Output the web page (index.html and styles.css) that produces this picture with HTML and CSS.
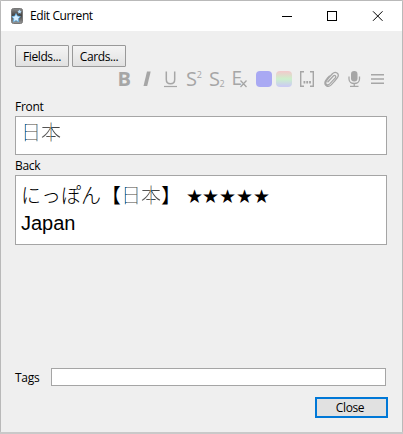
FILE: index.html
```html
<!DOCTYPE html>
<html lang="en">
<head>
<meta charset="utf-8">
<title>Edit Current</title>
<link rel="stylesheet" href="styles.css">
</head>
<body>
<main class="window">
  <header class="titlebar">
    <svg class="logo" width="12" height="16" viewBox="0 0 12 16">
      <defs><linearGradient id="lg" x2="0" y2="1"><stop offset="0" stop-color="#8a8a8a"/><stop offset=".45" stop-color="#444"/><stop offset="1" stop-color="#999"/></linearGradient></defs>
      <rect x=".5" y=".5" width="11" height="15" rx="2" fill="url(#lg)" stroke="#777"/>
      <path d="M5 5.500l1.400 2.600 3 .5-2.100 2.200.4 3-2.700-1.300-2.700 1.300.5-3L.9 8.600l2.900-.5z" fill="#d8efff" stroke="#56aee8" stroke-width=".7"/>
      <path d="M8.500 1.500l.7 1.300 1.500.2-1 1.100.2 1.500-1.400-.7-1.400.7.300-1.500-1.100-1.100 1.500-.2z" fill="#b9e0fb"/>
    </svg>
    <h1 class="title">Edit Current</h1>
    <svg class="controls" width="106" height="12" viewBox="0 0 106 12" fill="none" stroke="#000">
      <path d="M0 5.500h10M45.500 .5h9v9h-9z" shape-rendering="crispEdges"/><path d="M91 .3l9.500 9.500M100.500 .3L91 9.800"/>
    </svg>
  </header>
  <div class="buttons"><button class="btn fields">Fields...</button><button class="btn cards">Cards...</button></div>
  <svg class="tools" width="272" height="36" viewBox="0 -8 272 36" fill="#a6a6a6">
    <defs><linearGradient id="rainbow" x2="0" y2="1"><stop offset=".05" stop-color="#f0cccc"/><stop offset=".5" stop-color="#ccf0cc"/><stop offset=".95" stop-color="#ccccf3"/></linearGradient></defs>
    <text class="tool-text bold" x="1.500" y="15.500" textLength="13.500" lengthAdjust="spacingAndGlyphs">B</text>
    <path d="M31 1.500h3.700l-3.500 14.500h-3.700z"/>
    <g fill="none" stroke="#a6a6a6" stroke-width="1.500"><path d="M50.300 1.500v8c0 5.700 8.400 5.700 8.400 0v-8"/><path d="M48 16.500h13" stroke-width="1.200"/></g>
    <text class="tool-text" x="70" y="15.500" textLength="11" lengthAdjust="spacingAndGlyphs">S</text><text class="small" x="80.800" y="7.500">2</text>
    <text class="tool-text" x="93" y="15.500" textLength="11" lengthAdjust="spacingAndGlyphs">S</text><text class="small" x="103.500" y="17">2</text>
    <text class="tool-text" x="115.500" y="14.500" textLength="10.500" lengthAdjust="spacingAndGlyphs">E</text>
    <path d="M124.500 10.500l6 6.500M130.500 10.500l-6 6.500" fill="none" stroke="#a6a6a6" stroke-width="1.300"/>
    <rect x="140" y="1" width="16" height="16" rx="4" fill="#a9a9f3"/>
    <rect x="160" y="1" width="16" height="16" rx="4" fill="url(#rainbow)"/>
    <path d="M188 1.800h-3.300v14.400H188M194 1.800h3.300v14.400H194" fill="none" stroke="#a6a6a6" stroke-width="1.400"/>
    <path d="M187.500 11h1.800v2.500h-1.800zM190.300 11h1.800v2.500h-1.800zM193.100 11h1.800v2.500h-1.800z"/>
    <path d="M211.500 12.200l5.800-6.200c1.500-1.500 3.400.2 2 1.900l-5.600 6c-2 2-5.200.5-3.500-2.500 1-1.700 4.700-6 6.200-7.600 3-3.300 7.700-.2 5 3.900-1.500 2.200-4.300 5.300-6.200 7.200-3.200 3-7.200.6-6.100-3.300.5-1.800 2.700-4 4.600-6" fill="none" stroke="#a6a6a6" stroke-width="1.250"/>
    <rect x="235" y="1" width="6.500" height="10.500" rx="3.200"/>
    <path d="M233 6.500v2.500c0 6 10.500 6 10.500 0V6.500M238.250 13v3M234 16.400h8.500" fill="none" stroke="#a6a6a6" stroke-width="1.300"/>
    <path d="M255 4h13v1.500h-13zM255 8.300h13v1.500h-13zM255 12.500h13V14h-13z"/>
  </svg>
  <section class="note">
    <div class="label">Front</div>
    <div class="editor front"><span class="kanji">日本</span></div>
    <div class="label back-label">Back</div>
    <div class="editor back"><div>にっぽん【<span class="kanji">日本</span>】 <span class="stars">★★★★★</span></div><div>Japan</div></div>
  </section>
  <div class="tags"><label for="tags">Tags</label><input id="tags"></div>
  <button class="close">Close</button>
</main>
</body>
</html>
```
FILE: styles.css
```css
* { box-sizing: border-box; }
body { margin: 0; background: #c9c9c9; font: 12px/16px "Open Sans", sans-serif; color: #000; }
.window { display: flex; flex-direction: column; width: 401px; height: 431px; margin: 1px 0 0 1px; padding-right: 1px; background: #efefef; box-shadow: 0 0 2px #999; }
.titlebar { display: flex; align-items: center; height: 30px; margin-right: -1px; padding-left: 10px; background: #fff; flex: none; }
.title { margin: 0 0 0 7px; font-size: 12px; font-weight: 400; letter-spacing: -.4px; width: 80px; white-space: nowrap; }
.controls { margin: 1px 0 0 172px; }
.buttons { display: flex; gap: 3px; margin: 14px 0 0 14px; }
.btn { width: 54px; height: 22px; padding: 1px 0 0; border: 1px solid #999; border-radius: 1px; background: linear-gradient(#f4f4f4, #e1e1e1); font: 12px/20px "Open Sans", sans-serif; letter-spacing: -.4px; color: #000; }
.tools { margin: -5px 0 0 115px; flex: none; }
.tool-text { font: 20px "Open Sans", sans-serif; }
.tool-text.bold { font-weight: 700; }
.small { font: 9px "Open Sans", sans-serif; }
.note { margin: 1px 0 0 14px; width: 372px; }
.label { height: 17px; line-height: 16px; letter-spacing: -.3px; }
.back-label { margin-top: 3px; }
.editor { border: 1px solid #a5a5a5; background: #fff; padding: 5px; font: 300 20px/27px "Liberation Sans", "Noto Sans CJK JP", sans-serif; white-space: nowrap; }
.editor.front { height: 39px; padding-top: 3px; }
.editor.back { height: 70px; padding-top: 7px; }
.kanji { color: transparent; background: linear-gradient(90deg, #d99a50 3.5px, #1767a8 4px 5px, #999 6px 14px, #d99a50 15px, #1767a8 16px 18px, #555 20px 28px, #c98535 29.5px, #1767a8 30.5px, #444 32px); background-clip: text; -webkit-background-clip: text; }
.stars { font-family: "DejaVu Sans", sans-serif; font-size: 19px; line-height: 20px; letter-spacing: -.2px; margin-left: -1px; }
.tags { display: flex; align-items: center; margin: 123px 0 0 14px; height: 18px; letter-spacing: -.3px; }
.tags label { width: 36px; line-height: 18px; margin-top: 2px; }
.tags input { width: 335px; height: 18px; border: 1px solid #a5a5a5; border-radius: 0; background: #fff; padding: 0 3px; }
.close { width: 73px; height: 21px; margin: 11px 0 0 314px; padding: 0 3px 0 0; border: 2px solid #0078d7; background: #e1e1e1; font: 12px/17px "Open Sans", sans-serif; letter-spacing: -.4px; color: #000; }
```
